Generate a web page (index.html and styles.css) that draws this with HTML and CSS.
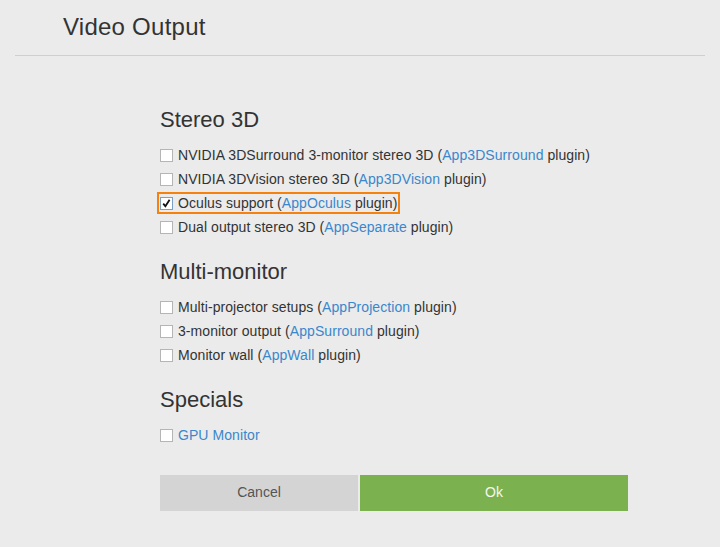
FILE: index.html
```html
<!DOCTYPE html>
<html>
<head>
<meta charset="utf-8">
<link rel="stylesheet" href="styles.css">
</head>
<body>
<div class="header"><h1 class="title">Video Output</h1></div>
<div class="content">
  <section class="group">
    <h2 class="group-title">Stereo 3D</h2>
    <ul class="options">
      <li class="option"><span class="box"></span><span>NVIDIA 3DSurround 3-monitor stereo 3D (<a class="link">App3DSurround</a> plugin)</span></li>
      <li class="option"><span class="box"></span><span>NVIDIA 3DVision stereo 3D (<a class="link">App3DVision</a> plugin)</span></li>
      <li class="option"><span class="focus"><span class="box checked"><svg width="11" height="11" viewBox="0 0 11 11"><path d="M2.2 5.6 L4.4 8.2 L8.6 1.8" fill="none" stroke="#111" stroke-width="1.8"/></svg></span><span>Oculus support (<a class="link">AppOculus</a> plugin)</span></span></li>
      <li class="option"><span class="box"></span><span>Dual output stereo 3D (<a class="link">AppSeparate</a> plugin)</span></li>
    </ul>
  </section>
  <section class="group">
    <h2 class="group-title">Multi-monitor</h2>
    <ul class="options">
      <li class="option"><span class="box"></span><span>Multi-projector setups (<a class="link">AppProjection</a> plugin)</span></li>
      <li class="option"><span class="box"></span><span>3-monitor output (<a class="link">AppSurround</a> plugin)</span></li>
      <li class="option"><span class="box"></span><span>Monitor wall (<a class="link">AppWall</a> plugin)</span></li>
    </ul>
  </section>
  <section class="group">
    <h2 class="group-title">Specials</h2>
    <ul class="options">
      <li class="option"><span class="box"></span><a class="link">GPU Monitor</a></li>
    </ul>
  </section>
  <div class="actions">
    <button class="btn cancel">Cancel</button>
    <button class="btn ok">Ok</button>
  </div>
</div>
</body>
</html>
```
FILE: styles.css
```css
html, body { margin: 0; padding: 0; }
body {
  background: #ebebeb;
  font-family: "Liberation Sans", Arial, sans-serif;
  color: #333;
  width: 720px;
  height: 547px;
  overflow: hidden;
}
.header {
  margin: 0 15px;
  padding: 13px 0 14px 48px;
  border-bottom: 1px solid #cfcfcf;
}
.title {
  margin: 0;
  font-size: 24px;
  line-height: 28px;
  font-weight: normal;
  letter-spacing: 0.25px;
  color: #333;
}
.content {
  width: 468px;
  margin: 0 0 0 160px;
  padding-top: 52px;
}
.group { margin-bottom: 21px; }
.group-title {
  margin: 0 0 11px 0;
  font-size: 22px;
  line-height: 24px;
  font-weight: normal;
  color: #333;
}
.options { list-style: none; margin: 0; padding: 0; }
.option {
  display: flex;
  align-items: center;
  height: 24px;
  font-size: 14px;
  letter-spacing: 0.07px;
  color: #333;
}
.focus {
  display: flex;
  align-items: center;
  outline: 2px solid #f5820f;
  outline-offset: 1px;
}
.box {
  box-sizing: border-box;
  width: 13px;
  height: 13px;
  background: #fff;
  border: 1px solid #b5b5b5;
  margin-right: 5px;
  display: flex;
  align-items: center;
  justify-content: center;
  flex: none;
}
.box.checked { border-color: #7a9fc9; }
.link { color: #3a87cc; text-decoration: none; }
.actions {
  display: flex;
  gap: 2px;
  margin-top: 28px;
}
.btn {
  height: 36px;
  border: none;
  font-family: "Liberation Sans", Arial, sans-serif;
  font-size: 14px;
  padding: 0 0 2px 0;
}
.cancel { width: 198px; background: #d4d4d4; color: #555; }
.ok { flex: 1; background: #7cb14f; color: #f4f8ee; }
```
